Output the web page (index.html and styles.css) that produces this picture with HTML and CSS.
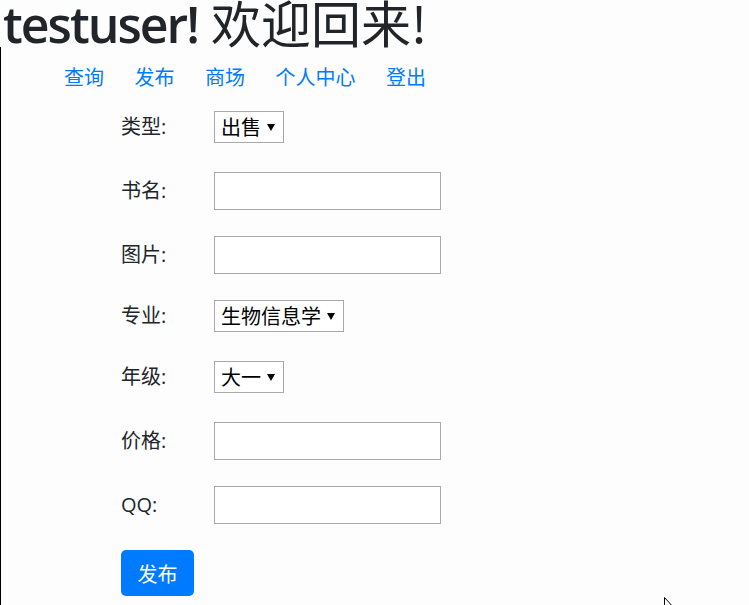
FILE: index.html
```html
<!DOCTYPE html>
<html lang="zh">
<head>
<meta charset="utf-8">
<title>发布</title>
<link rel="stylesheet" href="styles.css">
</head>
<body>
<h1 class="title"><span class="title-user">testuser!</span> <span class="title-cjk">欢迎回来!</span></h1>
<div class="main">
  <nav class="nav">
    <a class="nav-link" href="#">查询</a>
    <a class="nav-link" href="#">发布</a>
    <a class="nav-link" href="#">商场</a>
    <a class="nav-link" href="#">个人中心</a>
    <a class="nav-link" href="#">登出</a>
  </nav>
  <form class="form">
    <div class="row row-select">
      <label class="label">类型:</label>
      <span class="select-wrap"><select class="select"><option>出售</option><option>求购</option></select></span>
    </div>
    <div class="row">
      <label class="label">书名:</label>
      <input class="input" type="text">
    </div>
    <div class="row">
      <label class="label">图片:</label>
      <input class="input" type="text">
    </div>
    <div class="row row-select">
      <label class="label">专业:</label>
      <span class="select-wrap"><select class="select"><option>生物信息学</option></select></span>
    </div>
    <div class="row row-select">
      <label class="label">年级:</label>
      <span class="select-wrap"><select class="select"><option>大一</option><option>大二</option></select></span>
    </div>
    <div class="row">
      <label class="label">价格:</label>
      <input class="input" type="text">
    </div>
    <div class="row">
      <label class="label">QQ:</label>
      <input class="input" type="text">
    </div>
    <button class="btn" type="button">发布</button>
  </form>
</div>
<svg class="cursor" width="12" height="19" viewBox="0 0 12 19"><path d="M0.5 0.5 L0.5 15.5 L4 12 L6.5 18 L8.5 17 L6 11.5 L10.5 11.5 Z" fill="#fff" stroke="#000" stroke-width="1"/></svg>
</body>
</html>
```

FILE: styles.css
```css
html, body {
  margin: 0;
  padding: 0;
  overflow: hidden;
}
body {
  background: #fdfdfd;
  color: #212529;
  font-family: "Open Sans", "Noto Sans CJK SC", sans-serif;
  font-size: 20px;
  position: relative;
  height: 605px;
}
.title {
  margin: -1px 0 0 0;
  padding-left: 3px;
  font-size: 50px;
  line-height: 50px;
  height: 48px;
  font-weight: 600;
  white-space: nowrap;
}
.title-user {
  font-family: "Open Sans", sans-serif;
  font-weight: 600;
  letter-spacing: -2px;
}
.title-cjk {
  font-family: "Noto Sans CJK SC", sans-serif;
  font-weight: 400;
  line-height: 0;
}
.main {
  border-left: 1px solid #000;
  min-height: 560px;
}
.nav {
  display: flex;
  padding: 15px 0 0 63px;
  height: 30px;
}
.nav-link {
  color: #007bff;
  text-decoration: none;
  font-family: "Noto Sans CJK SC", sans-serif;
  line-height: 30px;
  margin-right: 30.5px;
}
.form {
  margin-top: 19px;
  padding-left: 120px;
}
.row {
  display: flex;
  align-items: center;
  margin-bottom: 26px;
}
.row-select {
  margin-bottom: 29px;
}
.label {
  width: 93px;
  font-family: "Open Sans", "Noto Sans CJK SC", sans-serif;
  color: #212529;
  line-height: 30px;
}
.input {
  box-sizing: border-box;
  width: 227px;
  height: 38px;
  border: 1px solid #a9a9a9;
  background: #fff;
  margin: 0;
  padding: 0 6px;
  font-size: 20px;
}
.select-wrap {
  position: relative;
  display: inline-block;
}
.select-wrap::after {
  content: "";
  position: absolute;
  right: 9px;
  top: 13px;
  border-left: 4px solid transparent;
  border-right: 4px solid transparent;
  border-top: 7px solid #000;
  pointer-events: none;
}
.select {
  -webkit-appearance: none;
  appearance: none;
  box-sizing: border-box;
  height: 32px;
  margin: 0;
  padding: 0 22px 0 6px;
  border: 1px solid #a9a9a9;
  border-radius: 0;
  background: #fff;
  color: #000;
  font-family: "Noto Sans CJK SC", sans-serif;
  font-size: 20px;
  line-height: 30px;
}
.btn {
  box-sizing: border-box;
  width: 73px;
  height: 46px;
  border: none;
  border-radius: 5px;
  background: #007bff;
  color: #fff;
  font-family: "Noto Sans CJK SC", sans-serif;
  font-size: 20px;
  padding: 0;
}
.cursor {
  position: absolute;
  left: 664px;
  top: 597px;
}
```
